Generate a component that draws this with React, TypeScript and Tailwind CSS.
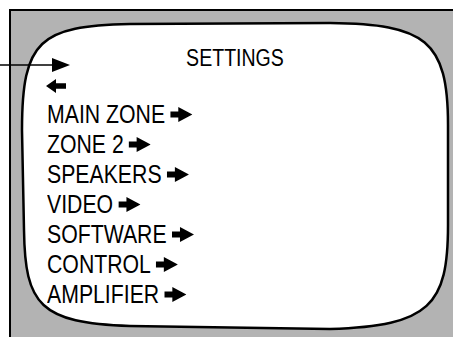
const items = ['MAIN ZONE', 'ZONE 2', 'SPEAKERS', 'VIDEO', 'SOFTWARE', 'CONTROL', 'AMPLIFIER']

// the row gets squeezed with scale-x, so the arrow is drawn a bit wider here
function RightArrow() {
    return (
        <svg width="26" height="15" viewBox="0 0 22 15" preserveAspectRatio="none" className="ml-[6px] shrink-0">
            <polygon points="0,4.5 8,4.5 8,0 22,7.5 8,15 8,10.5 0,10.5" fill="black" />
        </svg>
    )
}

export default function App() {
    return (
        <div className="relative w-[453px] h-[337px] bg-white overflow-hidden text-black font-['Liberation_Sans',Arial,sans-serif]">
            {/* monitor frame */}
            <div className="absolute left-[9px] top-[9px] right-0 bottom-0 bg-[#b3b3b3] border-l-2 border-t-2 border-black" />
            <svg className="absolute inset-0" width="453" height="337" viewBox="0 0 453 337">
                <path
                    d="M22,130 C22,40 40,26 130,24 L330,23 C425,24 448,40 448,125 L448,225 C448,305 430,326 330,329 L130,326 C40,323 25,305 24,230 Z"
                    fill="white"
                    stroke="black"
                    strokeWidth="2.5"
                />
                <line x1="0" y1="65" x2="55" y2="65" stroke="black" strokeWidth="1.6" />
                <polygon points="52,58 70,65 52,72" fill="black" />
            </svg>

            <div className="relative ml-[22px] w-[426px] pt-[43px] flex flex-col">
                <div className="h-[30px] leading-[30px] text-[23px] text-center scale-x-85">SETTINGS</div>
                <div className="h-[26px] pl-[24px] flex items-center">
                    <svg width="20" height="14" viewBox="0 0 20 14">
                        <polygon points="0,7 10,0 10,4.25 20,4.25 20,9.75 10,9.75 10,14" fill="black" />
                    </svg>
                </div>
                <ul className="pl-[25px] flex flex-col">
                    {items.map(item => (
                        <li key={item} className="h-[30px] flex items-center text-[25px] leading-[30px]">
                            <div className="flex items-center origin-left scale-x-85">
                                <span>{item}</span>
                                <RightArrow />
                            </div>
                        </li>
                    ))}
                </ul>
            </div>
        </div>
    )
}
